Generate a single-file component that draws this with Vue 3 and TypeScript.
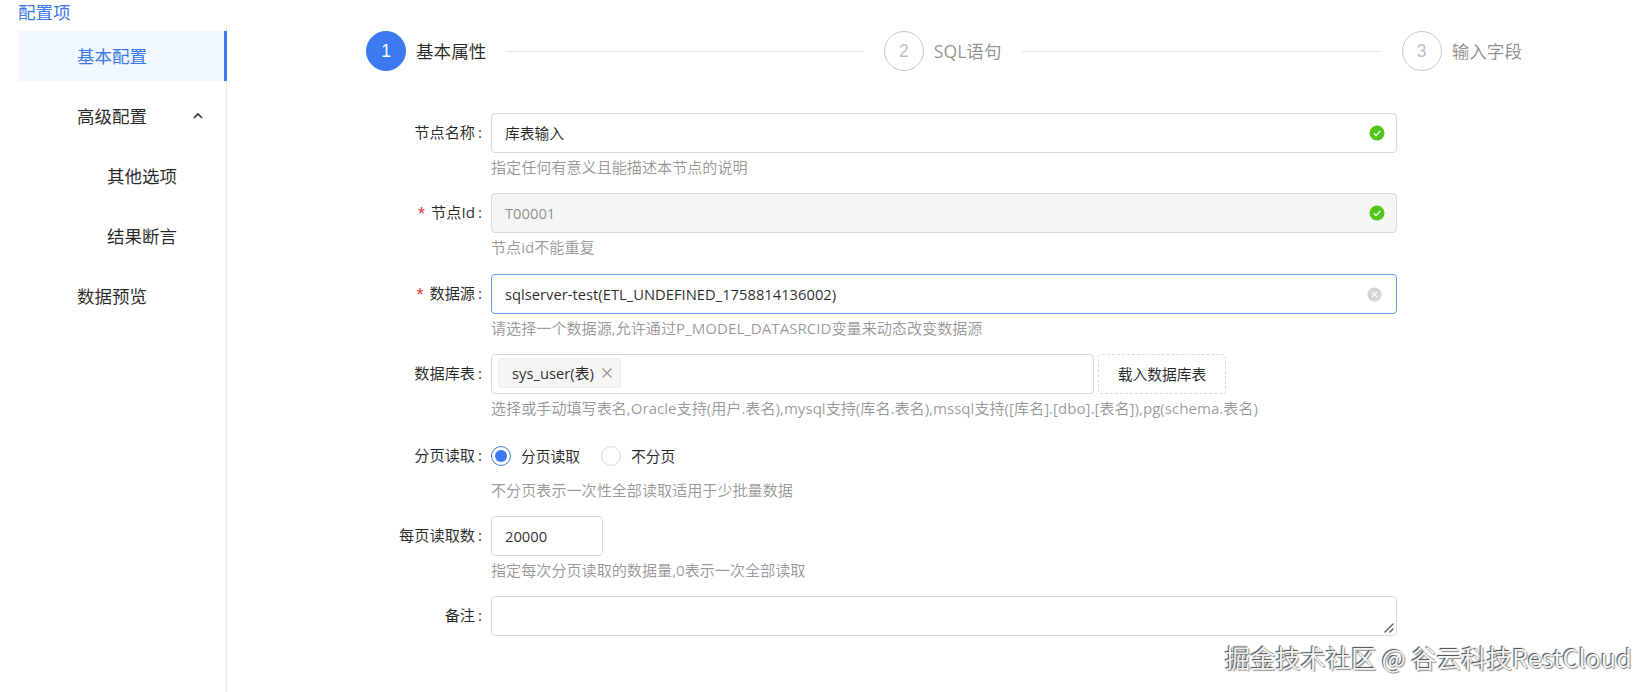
<script setup lang="ts">
const steps = [
  { n: 1, label: '基本属性', active: true },
  { n: 2, label: 'SQL语句', active: false },
  { n: 3, label: '输入字段', active: false },
]
</script>

<template>
  <div class="page">
    <div class="title">配置项</div>
    <div class="body">
      <aside class="side">
        <div class="item active"><span>基本配置</span></div>
        <div class="item">
          <span>高级配置</span>
          <svg class="chev" width="12" height="12" viewBox="0 0 12 12"><path d="M2 8 L6 4 L10 8" fill="none" stroke="#333" stroke-width="1.6" /></svg>
        </div>
        <div class="item sub"><span>其他选项</span></div>
        <div class="item sub"><span>结果断言</span></div>
        <div class="item"><span>数据预览</span></div>
      </aside>
      <main class="main">
        <div class="steps">
          <div v-for="s in steps" :key="s.n" class="step" :class="{ on: s.active }">
            <div class="circle">{{ s.n }}</div>
            <div class="step-label">{{ s.label }}</div>
            <div v-if="s.n < 3" class="line"></div>
          </div>
        </div>
        <div class="form">
          <div class="row">
            <label class="lab">节点名称<b>:</b></label>
            <div class="ctl">
              <div class="box">
                <span>库表输入</span>
                <svg class="st" width="16" height="16" viewBox="0 0 16 16"><circle cx="8" cy="8" r="7.5" fill="#52c41a" /><path d="M4.8 8.2 L7.2 10.6 L11.2 5.8" fill="none" stroke="#fff" stroke-width="1.3" /></svg>
              </div>
              <div class="hint">指定任何有意义且能描述本节点的说明</div>
            </div>
          </div>
          <div class="row">
            <label class="lab"><i>*</i>节点Id<b>:</b></label>
            <div class="ctl">
              <div class="box dis">
                <span>T00001</span>
                <svg class="st" width="16" height="16" viewBox="0 0 16 16"><circle cx="8" cy="8" r="7.5" fill="#52c41a" /><path d="M4.8 8.2 L7.2 10.6 L11.2 5.8" fill="none" stroke="#fff" stroke-width="1.3" /></svg>
              </div>
              <div class="hint">节点id不能重复</div>
            </div>
          </div>
          <div class="row">
            <label class="lab"><i>*</i>数据源<b>:</b></label>
            <div class="ctl">
              <div class="box focus">
                <span>sqlserver-test(ETL_UNDEFINED_1758814136002)</span>
                <svg class="st clr" width="15" height="15" viewBox="0 0 16 16"><circle cx="8" cy="8" r="7.5" fill="#d4d4d4" /><path d="M5.2 5.2 L10.8 10.8 M10.8 5.2 L5.2 10.8" fill="none" stroke="#fff" stroke-width="1.3" /></svg>
              </div>
              <div class="hint">请选择一个数据源,允许通过P_MODEL_DATASRCID变量来动态改变数据源</div>
            </div>
          </div>
          <div class="row tall">
            <label class="lab">数据库表<b>:</b></label>
            <div class="ctl">
              <div class="inline">
                <div class="box tags">
                  <div class="tag">
                    <span>sys_user(表)</span>
                    <svg width="12" height="12" viewBox="0 0 12 12"><path d="M1.5 1.5 L10.5 10.5 M10.5 1.5 L1.5 10.5" fill="none" stroke="#8c8c8c" stroke-width="1.1" /></svg>
                  </div>
                </div>
                <div class="load">载入数据库表</div>
              </div>
              <div class="hint">选择或手动填写表名,Oracle支持(用户.表名),mysql支持(库名.表名),mssql支持([库名].[dbo].[表名]),pg(schema.表名)</div>
            </div>
          </div>
          <div class="row">
            <label class="lab">分页读取<b>:</b></label>
            <div class="ctl">
              <div class="radios">
                <span class="radio sel"></span><span class="rtext first">分页读取</span>
                <span class="radio"></span><span class="rtext">不分页</span>
              </div>
              <div class="hint">不分页表示一次性全部读取适用于少批量数据</div>
            </div>
          </div>
          <div class="row">
            <label class="lab">每页读取数<b>:</b></label>
            <div class="ctl">
              <div class="box num"><span>20000</span></div>
              <div class="hint">指定每次分页读取的数据量,0表示一次全部读取</div>
            </div>
          </div>
          <div class="row">
            <label class="lab">备注<b>:</b></label>
            <div class="ctl">
              <div class="box area">
                <svg class="grip" width="12" height="12" viewBox="0 0 12 12"><path d="M1.5 10.5 L10.5 1.5 M6.5 10.5 L10.5 6.5" fill="none" stroke="#555" stroke-width="1.2" /></svg>
              </div>
            </div>
          </div>
        </div>
      </main>
    </div>
    <div class="mark">掘金技术社区 @ 谷云科技RestCloud</div>
  </div>
</template>

<style>
html, body { margin: 0; background: #fff; }
</style>

<style scoped>
.page {
  position: relative;
  width: 1652px;
  height: 692px;
  overflow: hidden;
  background: #fff;
  font-family: "Open Sans", "Noto Sans CJK SC", sans-serif;
  color: rgba(0, 0, 0, 0.85);
  font-size: 14.75px;
}
.title {
  height: 25px;
  line-height: 25px;
  padding-left: 18px;
  font-size: 17.5px;
  color: #3c78e8;
}
.body { display: flex; height: 667px; }
.side {
  width: 208px;
  margin-left: 18px;
  padding-top: 6px;
  border-right: 1px solid #e8e8e8;
  flex: none;
  box-sizing: content-box;
  font-size: 17.5px;
}
.item {
  position: relative;
  height: 50px;
  line-height: 50px;
  margin-bottom: 10px;
  padding-left: 59px;
}
.item.sub { padding-left: 89px; }
.item.active {
  margin-right: -1px;
  background: #f0f7ff;
  color: #3c78e8;
  border-right: 3px solid #3c78f0;
}
.chev { position: absolute; left: 174px; top: 19px; }
.main { flex: 1; min-width: 0; }
.steps {
  display: flex;
  width: 1156px;
  margin: 6px 0 0 139px;
  height: 40px;
}
.step { display: flex; align-items: center; flex: 1; color: rgba(0, 0, 0, 0.45); }
.step:last-child { flex: none; }
.step.on { color: rgba(0, 0, 0, 0.85); }
.circle {
  width: 40px;
  height: 40px;
  box-sizing: border-box;
  border: 1px solid #c8c8c8;
  border-radius: 50%;
  text-align: center;
  line-height: 38px;
  font-size: 17.5px;
  color: #bdbdbd;
  flex: none;
  font-family: "Liberation Sans", sans-serif;
}
.step.on .circle { background: #3c78f0; border-color: #3c78f0; color: #fff; }
.step-label { margin-left: 10px; font-size: 17.6px; line-height: 40px; white-space: nowrap; }
.line { flex: none; width: 358px; height: 1px; background: #e4e4e4; margin-left: auto; margin-right: 20px; }
.step:nth-child(2) .line { width: 359px; margin-right: 21px; }
.form { margin-top: 42px; }
.row { display: flex; height: 80.3px; }
.row.tall { height: 82px; }
.lab {
  width: 255px;
  margin-right: 9px;
  flex: none;
  text-align: right;
  line-height: 38px;
  height: 40px;
  white-space: nowrap;
  font-size: 15.2px;
}
.lab b { font-weight: 400; margin-left: 3px; }
.lab i { font-style: normal; font-size: 18px; line-height: 18px; vertical-align: -2px; color: #e5303c; margin-right: 6px; font-family: "Liberation Sans", sans-serif; }
.ctl { width: 906px; }
.box {
  position: relative;
  box-sizing: border-box;
  height: 40px;
  line-height: 38px;
  padding: 0 13px;
  border: 1px solid #d9d9d9;
  border-radius: 4px;
  background: #fff;
}
.box.dis { background: #f5f5f5; color: rgba(0, 0, 0, 0.45); }
.box.focus { border-color: #6f9ee8; }
.st { position: absolute; right: 11px; top: 11px; }
.st.clr { right: 14px; top: 12px; }
.hint {
  height: 24px;
  line-height: 28px;
  color: rgba(0, 0, 0, 0.42);
  white-space: nowrap;
  font-size: 15.1px;
}
.inline { display: flex; gap: 4px; }
.tags { flex: none; width: 603px; padding: 4px 6px; }
.tag {
  display: flex;
  align-items: center;
  height: 30px;
  width: 123px;
  box-sizing: border-box;
  padding-left: 13px;
  background: #f5f5f5;
  border: 1px solid #ececec;
  border-radius: 3px;
  line-height: 28px;
  margin-top: -0.5px;
}
.tag svg { margin-left: 7px; }
.load {
  box-sizing: border-box;
  width: 128px;
  height: 40px;
  line-height: 38px;
  text-align: center;
  border: 1px dashed #d9d9d9;
  border-radius: 4px;
}
.radios { display: flex; align-items: center; height: 40px; }
.radio {
  position: relative;
  box-sizing: border-box;
  width: 20px;
  height: 20px;
  border: 1px solid #d9d9d9;
  border-radius: 50%;
  flex: none;
}
.radio.sel { border-color: #3c78f0; }
.radio.sel::after {
  content: "";
  position: absolute;
  inset: 3px;
  border-radius: 50%;
  background: #3c78f0;
}
.rtext { margin-left: 10px; }
.rtext.first { width: 60px; margin-right: 20px; }
.num { width: 112px; }
.area { width: 906px; }
.grip { position: absolute; right: 1px; bottom: 1px; }
.mark {
  position: absolute;
  left: 1225px;
  top: 639px;
  font-size: 25.2px;
  line-height: 36px;
  white-space: nowrap;
  font-family: "Noto Sans CJK SC", sans-serif;
  color: #f4f4f4;
  text-shadow: -1px -1px 1px #444, 1px 1px 1px #888;
}
</style>
